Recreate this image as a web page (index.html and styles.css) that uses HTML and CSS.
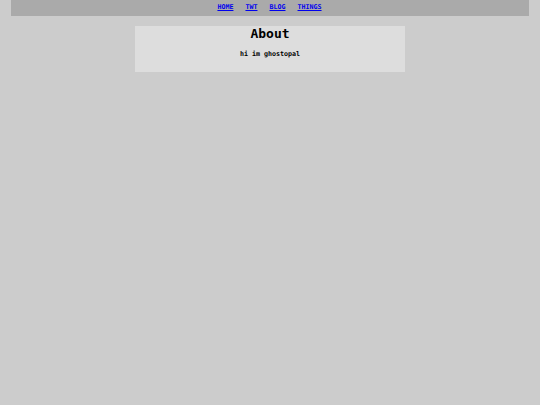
FILE: index.html
```html
<!DOCTYPE html>
<html>
<head>
<meta charset="utf-8">
<link rel="stylesheet" href="styles.css">
</head>
<body>
<nav class="nav">
  <a href="#">HOME</a>
  <a href="#">TWT</a>
  <a href="#">BLOG</a>
  <a href="#">THINGS</a>
</nav>
<main class="box">
  <h1 class="title">About</h1>
  <p class="text">hi im ghostopal</p>
</main>
</body>
</html>
```
FILE: styles.css
```css
html, body {
  margin: 0;
  padding: 0;
  background: #cccccc;
  font-family: "DejaVu Sans Mono", monospace;
  font-weight: bold;
}
.nav {
  width: 96%;
  margin: 0 auto;
  height: 16px;
  background: #aaaaaa;
  display: flex;
  justify-content: center;
  align-items: flex-start;
  padding-top: 3px;
  padding-right: 1px;
  box-sizing: border-box;
  gap: 12px;
  font-size: 6.67px;
  line-height: 8px;
}
.nav a {
  color: #0000ee;
}
.box {
  width: 270px;
  margin: 10px auto 0;
  height: 46px;
  background: #dddddd;
  text-align: center;
  box-sizing: border-box;
  padding-top: 1px;
}
.title {
  margin: 0;
  font-size: 13px;
  line-height: 14px;
}
.text {
  margin: 9px 0 0;
  font-size: 6.67px;
  line-height: 8px;
}
```
